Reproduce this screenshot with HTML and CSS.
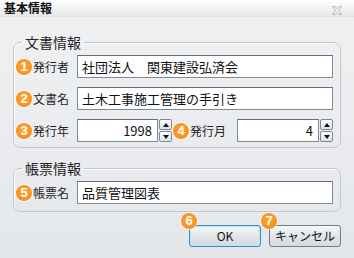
FILE: index.html
```html
<!DOCTYPE html>
<html lang="ja">
<head>
    <meta charset="UTF-8">
    <title>基本情報</title>
    <link rel="stylesheet" href="styles.css">
</head>
<body>
    <div class="dialog">
        <div class="titlebar">
            <span class="title">基本情報</span>
            <svg class="close" width="10" height="9" viewBox="0 0 10 9">
                <path d="M0.5 0.5h2.5l2 2.2l2-2.2h2.5l-3.2 4l3.2 4h-2.5l-2-2.2l-2 2.2h-2.5l3.2-4z" fill="#fafafa" stroke="#a9adb2" stroke-width="0.9"/>
            </svg>
        </div>

        <fieldset class="group">
            <legend>文書情報</legend>
            <div class="row">
                <span class="badge">1</span>
                <label class="label" for="hakkosha">発行者</label>
                <input class="text" id="hakkosha" type="text" value="社団法人　関東建設弘済会">
            </div>
            <div class="row">
                <span class="badge">2</span>
                <label class="label" for="bunsho">文書名</label>
                <input class="text" id="bunsho" type="text" value="土木工事施工管理の手引き">
            </div>
            <div class="row">
                <span class="badge">3</span>
                <label class="label" for="nen">発行年</label>
                <div class="spin spin-year">
                    <input class="text num" id="nen" type="text" value="1998">
                    <div class="spin-buttons">
                        <span class="spin-btn"><svg width="6" height="4" viewBox="0 0 6 4"><path d="M3 0L6 4H0z" fill="#111"/></svg></span>
                        <span class="spin-btn"><svg width="6" height="4" viewBox="0 0 6 4"><path d="M0 0H6L3 4z" fill="#111"/></svg></span>
                    </div>
                </div>
                <span class="badge badge-gap">4</span>
                <label class="label label-wide" for="tsuki">発行月</label>
                <div class="spin spin-month">
                    <input class="text num" id="tsuki" type="text" value="4">
                    <div class="spin-buttons">
                        <span class="spin-btn"><svg width="6" height="4" viewBox="0 0 6 4"><path d="M3 0L6 4H0z" fill="#111"/></svg></span>
                        <span class="spin-btn"><svg width="6" height="4" viewBox="0 0 6 4"><path d="M0 0H6L3 4z" fill="#111"/></svg></span>
                    </div>
                </div>
            </div>
        </fieldset>

        <fieldset class="group group-form">
            <legend>帳票情報</legend>
            <div class="row">
                <span class="badge">5</span>
                <label class="label" for="chohyo">帳票名</label>
                <input class="text" id="chohyo" type="text" value="品質管理図表">
            </div>
        </fieldset>

        <div class="actions">
            <div class="btn-wrap">
                <span class="badge badge-btn">6</span>
                <button class="btn btn-default" type="button">OK</button>
            </div>
            <div class="btn-wrap">
                <span class="badge badge-btn">7</span>
                <button class="btn" type="button">キャンセル</button>
            </div>
        </div>
    </div>
</body>
</html>
```

FILE: styles.css
```css
body {
    margin: 0;
    padding: 0;
    font-family: "Noto Sans CJK JP", "Noto Sans", sans-serif;
    color: #1e1e1e;
}
.dialog {
    width: 354px;
    height: 258px;
    background: linear-gradient(#f0f1f3, #e4e7ea);
    overflow: hidden;
}
.titlebar {
    height: 16px;
    display: flex;
    justify-content: space-between;
    align-items: center;
    padding: 0 12px 0 4px;
    background: linear-gradient(#ffffff, #e6e8eb);
    border-bottom: 1px solid #dde0e4;
}
.title {
    font-size: 12px;
    font-weight: bold;
    line-height: 16px;
    color: #111;
}
.close {
    display: block;
    margin-top: 4px;
}
.group {
    min-width: 0;
    min-inline-size: 0;
    margin: 17px 13px 0 13px;
    padding: 5px 7px 5px 2px;
    border: 1px solid #c4c8cd;
    border-radius: 7px;
    box-shadow: inset 1px 1px 0 #fafbfc;
}
.group legend {
    margin-left: 6px;
    padding: 0 3px;
    font-size: 14px;
    line-height: 16px;
    color: #222;
}
.group-form {
    margin-top: 12px;
    padding-bottom: 7px;
}
.row {
    display: flex;
    align-items: center;
    height: 23px;
    margin-bottom: 9px;
}
.row:last-child {
    margin-bottom: 0;
}
.badge {
    width: 16px;
    height: 16px;
    flex: none;
    border-radius: 50%;
    background: radial-gradient(circle at 50% 40%, #ffa338, #f38a0f);
    box-shadow: 0 0 0 1px rgba(255,255,255,0.75);
    color: #fff;
    font-family: "Liberation Sans", sans-serif;
    font-size: 13px;
    font-weight: bold;
    line-height: 16px;
    text-align: center;
}
.badge-gap {
    margin-left: 1px;
}
.label {
    width: 44px;
    flex: none;
    padding-left: 1px;
    font-size: 12px;
    line-height: 23px;
}
.label-wide {
    width: 47px;
}
.text {
    flex: 1;
    width: 0;
    min-width: 0;
    height: 23px;
    box-sizing: border-box;
    margin: 0;
    padding: 0 4px;
    border: 1px solid #7d8b99;
    border-top-color: #5f6f80;
    background: #fff;
    font-family: "Noto Sans CJK JP", sans-serif;
    font-size: 13px;
    color: #111;
    outline: none;
}
.num {
    text-align: right;
    padding-right: 5px;
}
.spin {
    display: flex;
    height: 23px;
    min-width: 0;
}
.spin-year {
    width: 95px;
    flex: none;
}
.spin-month {
    flex: 1;
}
.spin-buttons {
    width: 13px;
    margin-left: 1px;
    display: flex;
    flex-direction: column;
    gap: 1px;
}
.spin-btn {
    flex: 1;
    display: flex;
    align-items: center;
    justify-content: center;
    border: 1px solid #7a8898;
    border-radius: 2px;
    background: linear-gradient(#fdfdfd, #dfe3e7);
}
.spin-btn svg {
    display: block;
}
.actions {
    display: flex;
    justify-content: flex-end;
    gap: 8px;
    margin: 10px 13px 0 0;
}
.btn-wrap {
    position: relative;
}
.badge-btn {
    position: absolute;
    left: -8px;
    top: -9px;
}
.btn {
    width: 72px;
    height: 22px;
    margin: 0;
    padding: 0;
    border: 1px solid #6f7f90;
    border-radius: 3px;
    background: linear-gradient(#f6f7f8, #e2e5e8 50%, #d6dadf);
    font-family: "Noto Sans CJK JP", sans-serif;
    font-size: 12px;
    color: #111;
}
.btn-default {
    border-color: #3a8fbf;
    box-shadow: inset 0 0 0 1px #bfe3f5;
}
```
